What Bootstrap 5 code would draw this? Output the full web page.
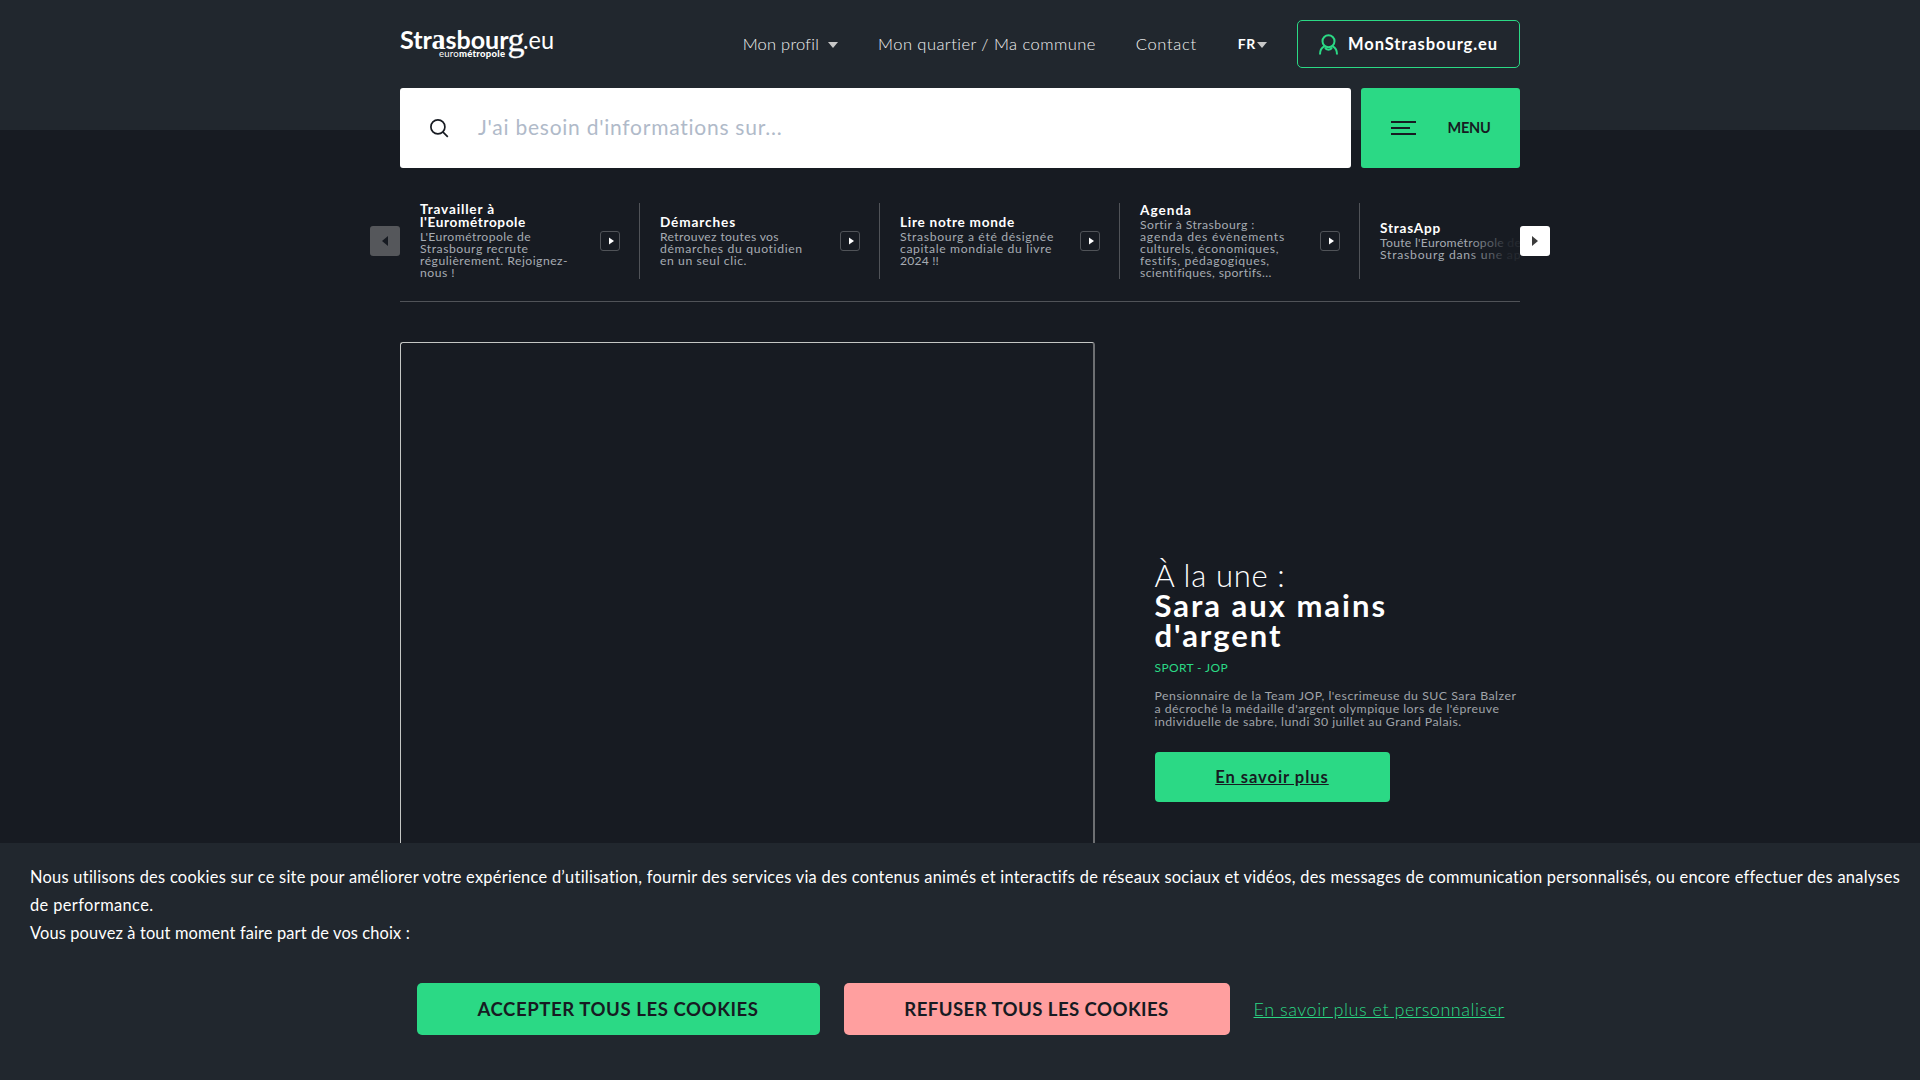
<!DOCTYPE html>
<html lang="fr">
<head>
<meta charset="utf-8">
<title>Strasbourg.eu</title>
<link href="https://cdn.jsdelivr.net/npm/bootstrap@5.3.0/dist/css/bootstrap.min.css" rel="stylesheet">
<style>
body{font-family:Lato,"Open Sans",sans-serif;background:#171b22;color:#fff;width:1920px;height:1080px;overflow:hidden;position:relative}
.wrap{width:1120px;margin:0 auto}
.ln{display:block;width:max-content;white-space:nowrap}
.masthead{height:130px;background:#21272e}
.topbar{height:88px}
.topnav a{color:#f2f2f2;font-size:16.5px;font-weight:300;text-decoration:none;line-height:24px}
.topnav .lang{color:#fff;font-size:14px;font-weight:700}
.caret{width:0;height:0;border:5px solid transparent;border-top:6px solid #c8c8c8;border-bottom:0;margin:2px 40px 0 9px}
.lang + .caret{margin:2px 30px 0 1px}
.account{width:223px;height:48px;border:1px solid #2bd985;border-radius:5px;color:#fff;font-weight:700;font-size:16.5px;padding-left:21px;gap:10px}
.searchbox{width:950.5px;height:80px;background:#fff;border-radius:3px;padding-left:30px;gap:29px}
.searchbox .ln{color:#b0bac9;font-size:21px;padding-bottom:2px}
.menubtn{width:159.5px;height:80px;background:#2bd985;border:0;border-radius:3px;color:#171b22;font-weight:700;font-size:14.5px;padding-left:30px;gap:32px}
.quick{width:1180px;height:76px;margin:73px auto 0}
.track{width:1120px;position:relative;overflow:hidden}
.slide-item{width:240px;height:76px;padding:0 19px 0 20px;border-right:1px solid #505358;flex:none}
.slide-item:nth-child(5){border:0}
.hd{font-weight:700;font-size:13.6px;line-height:13px;margin-bottom:2px}
.tx{font-size:12.2px;line-height:12px;color:#a6abb2}
.go{width:20px;height:20px;border:1px solid #505358;border-radius:3px;padding-left:3px}
.fade-edge{position:absolute;right:0;top:0;width:54px;height:76px;background:linear-gradient(90deg,rgba(23,27,34,0),rgba(23,27,34,.9) 80%)}
.pager{width:30px;height:30px;border-radius:3px;flex:none}
.pager-off{background:#55575b}
.rule{height:1px;background:#505358;margin-top:22px}
.hero{margin-top:40px}
.visual{width:695px;height:600px;border:1px solid #c4c6c4;border-right:2px solid #6d6f72;border-radius:3px}
.story{padding-left:59.5px;padding-top:217.5px}
.story h1{font-size:31px;line-height:30px;font-weight:300;margin:0}
.story h1 b{font-weight:700}
.tag{font-size:12px;line-height:16px;color:#2bd985;margin-top:10px}
.lede{font-size:12.3px;line-height:13px;color:#a0a4a9;margin:13.5px 0 0}
.more{width:235px;height:50px;border-radius:4px;background:#2bd985;color:#171b22;font-weight:700;font-size:16.5px;margin-top:24px}
.cookies{position:absolute;left:0;bottom:0;width:1920px;height:237px;background:#21272e;padding:20px 0 0 30px;font-size:16.4px;line-height:28px}
.choices{margin:36px 29px 0 0;gap:24px}
.choice{height:52px;border:0;border-radius:5px;color:#171b22;font-weight:700;font-size:18.6px}
.choice-yes{width:403px;background:#2bd985}
.choice-no{width:386px;background:#ff9f9f}
.custom{font-size:18px;font-weight:300;color:#2bd985}
/* tracking per line */
.k1{letter-spacing:.244px}.k2{letter-spacing:.457px}.k3{letter-spacing:.679px}.k4{letter-spacing:.648px}.k5{letter-spacing:.909px}
.k6{letter-spacing:.75px}.k7{letter-spacing:-.246px}.k8{letter-spacing:.844px}.k9{letter-spacing:.621px}.k10{letter-spacing:.415px}
.k11{letter-spacing:.522px}.k12{letter-spacing:.476px}.k13{letter-spacing:.469px}.k14{letter-spacing:.875px}.k15{letter-spacing:.334px}
.k16{letter-spacing:.653px}.k17{letter-spacing:.569px}.k18{letter-spacing:.711px}.k19{letter-spacing:.656px}.k20{letter-spacing:.618px}
.k21{letter-spacing:.15px}.k22{letter-spacing:.992px}.k23{letter-spacing:.446px}.k24{letter-spacing:.804px}.k25{letter-spacing:.603px}
.k26{letter-spacing:.665px}.k27{letter-spacing:.384px}.k28{letter-spacing:.77px}.k29{letter-spacing:.272px}.k30{letter-spacing:.748px}
.k31{letter-spacing:.691px}.k32{letter-spacing:1.98px}.k33{letter-spacing:1.965px}.k34{letter-spacing:.371px}.k35{letter-spacing:.51px}
.k36{letter-spacing:.48px}.k37{letter-spacing:.454px}.k38{letter-spacing:.963px}.k39{letter-spacing:.273px}.k40{letter-spacing:.397px}
.k41{letter-spacing:.134px}.k42{letter-spacing:.547px}.k43{letter-spacing:.424px}.k44{letter-spacing:.523px}
</style>
</head>
<body>
<header class="masthead">
 <div class="wrap">
  <div class="topbar d-flex align-items-center">
   <svg width="160" height="40" viewBox="0 0 160 40" fill="#fff"><g font-family="Lato, sans-serif" font-size="25" font-weight="700"><text x="0" y="25" textLength="32" lengthAdjust="spacingAndGlyphs">Str</text><text x="31.500" y="25" font-family="Liberation Serif, serif" font-size="29" textLength="14" lengthAdjust="spacingAndGlyphs">a</text><text x="45.500" y="25" textLength="63" lengthAdjust="spacingAndGlyphs">sbour</text><text x="107.500" y="26.800" font-family="Liberation Serif, serif" font-weight="400" font-size="34" stroke="#fff" stroke-width=".3">g</text><text x="123" y="25" font-weight="400" textLength="31" lengthAdjust="spacingAndGlyphs">.eu</text></g><text x="39" y="33" font-family="Lato, sans-serif" font-size="9.500" textLength="66">euro<tspan font-weight="900">métropole</tspan></text></svg>
   <nav class="topnav d-flex align-items-center ms-auto">
    <a href="#"><span class="ln k1">Mon profil</span></a><i class="caret"></i>
    <a href="#"><span class="ln k2">Mon quartier / Ma commune</span></a>
    <a href="#" style="margin:0 41px 0 40px"><span class="ln k3">Contact</span></a>
    <a href="#" class="lang"><span class="ln k4">FR</span></a><i class="caret"></i>
   </nav>
   <a href="#" class="account d-flex align-items-center text-decoration-none"><svg width="19" height="21" viewBox="0 0 19 21" fill="none" stroke="#2bd985" stroke-width="2"><circle cx="9.500" cy="7.200" r="6"/><path d="M1 20.500c0-4.300 1.800-7 4.600-8.300M18 20.500c0-4.300-1.800-7-4.600-8.300M6 13.500c1.500 3 5.500 3 7 0"/></svg><span class="ln k5">MonStrasbourg.eu</span></a>
  </div>
  <div class="d-flex justify-content-between">
   <div class="searchbox d-flex align-items-center"><svg width="19" height="19" viewBox="0 0 19 19" fill="none" stroke="#171b22" stroke-width="1.700"><circle cx="7.900" cy="7.900" r="7"/><path d="M12.800 12.800l5 5"/></svg><span class="ln k6">J'ai besoin d'informations sur...</span></div>
   <button class="menubtn d-flex align-items-center"><svg width="25" height="14" viewBox="0 0 25 14" stroke="#171b22" stroke-width="2"><path d="M0 1h25M0 7h19M0 13h25"/></svg><span class="ln k7">MENU</span></button>
  </div>
 </div>
</header>
<section class="quick d-flex align-items-center">
 <div class="pager pager-off d-flex align-items-center justify-content-center"><svg width="6" height="10"><path d="M6 0v10L0 5z" fill="#171b22"/></svg></div>
 <div class="track d-flex">
  <div class="slide-item d-flex align-items-center justify-content-between"><div><div class="hd"><span class="ln k8">Travailler à</span><span class="ln k9">l'Eurométropole</span></div><div class="tx"><span class="ln k10">L'Eurométropole de</span><span class="ln k11">Strasbourg recrute</span><span class="ln k12">régulièrement. Rejoignez-</span><span class="ln k13">nous !</span></div></div><i class="go d-flex align-items-center justify-content-center"><svg width="5" height="8"><path d="M0 .5l5 3.500-5 3.500z" fill="#fff"/></svg></i></div>
  <div class="slide-item d-flex align-items-center justify-content-between"><div><div class="hd"><span class="ln k14">Démarches</span></div><div class="tx"><span class="ln k15">Retrouvez toutes vos</span><span class="ln k16">démarches du quotidien</span><span class="ln k17">en un seul clic.</span></div></div><i class="go d-flex align-items-center justify-content-center"><svg width="5" height="8"><path d="M0 .5l5 3.500-5 3.500z" fill="#fff"/></svg></i></div>
  <div class="slide-item d-flex align-items-center justify-content-between"><div><div class="hd"><span class="ln k18">Lire notre monde</span></div><div class="tx"><span class="ln k19">Strasbourg a été désignée</span><span class="ln k20">capitale mondiale du livre</span><span class="ln k21">2024 !!</span></div></div><i class="go d-flex align-items-center justify-content-center"><svg width="5" height="8"><path d="M0 .5l5 3.500-5 3.500z" fill="#fff"/></svg></i></div>
  <div class="slide-item d-flex align-items-center justify-content-between"><div><div class="hd"><span class="ln k22">Agenda</span></div><div class="tx"><span class="ln k23">Sortir à Strasbourg :</span><span class="ln k24">agenda des évènements</span><span class="ln k25">culturels, économiques,</span><span class="ln k26">festifs, pédagogiques,</span><span class="ln k27">scientifiques, sportifs...</span></div></div><i class="go d-flex align-items-center justify-content-center"><svg width="5" height="8"><path d="M0 .5l5 3.500-5 3.500z" fill="#fff"/></svg></i></div>
  <div class="slide-item d-flex align-items-center"><div><div class="hd"><span class="ln k28">StrasApp</span></div><div class="tx"><span class="ln k29">Toute l'Eurométropole de</span><span class="ln k30">Strasbourg dans une ap</span></div></div></div>
  <div class="fade-edge"></div>
 </div>
 <div class="pager bg-white d-flex align-items-center justify-content-center"><svg width="6" height="10"><path d="M0 0v10l6-5z" fill="#3c3c3c"/></svg></div>
</section>
<main class="wrap">
 <div class="rule"></div>
 <div class="hero d-flex">
  <div class="visual"></div>
  <div class="story">
   <h1><span class="ln k31">À la une :</span><b class="ln k32">Sara aux mains</b><b class="ln k33">d'argent</b></h1>
   <div class="tag"><span class="ln k34">SPORT - JOP</span></div>
   <p class="lede"><span class="ln k35">Pensionnaire de la Team JOP, l'escrimeuse du SUC Sara Balzer</span><span class="ln k36">a décroché la médaille d'argent olympique lors de l'épreuve</span><span class="ln k37">individuelle de sabre, lundi 30 juillet au Grand Palais.</span></p>
   <a href="#" class="more d-flex align-items-center justify-content-center"><span class="ln k38">En savoir plus</span></a>
  </div>
 </div>
</main>
<div class="cookies">
 <span class="ln k39">Nous utilisons des cookies sur ce site pour améliorer votre expérience d’utilisation, fournir des services via des contenus animés et interactifs de réseaux sociaux et vidéos, des messages de communication personnalisés, ou encore effectuer des analyses</span>
 <span class="ln k40">de performance.</span>
 <span class="ln k41">Vous pouvez à tout moment faire part de vos choix :</span>
 <div class="choices d-flex align-items-center justify-content-center">
  <button class="choice choice-yes d-flex align-items-center justify-content-center"><span class="ln k42">ACCEPTER TOUS LES COOKIES</span></button>
  <button class="choice choice-no d-flex align-items-center justify-content-center"><span class="ln k43">REFUSER TOUS LES COOKIES</span></button>
  <a href="#" class="custom"><span class="ln k44">En savoir plus et personnaliser</span></a>
 </div>
</div>
<script src="https://cdn.jsdelivr.net/npm/bootstrap@5.3.0/dist/js/bootstrap.bundle.min.js"></script>
</body>
</html>
